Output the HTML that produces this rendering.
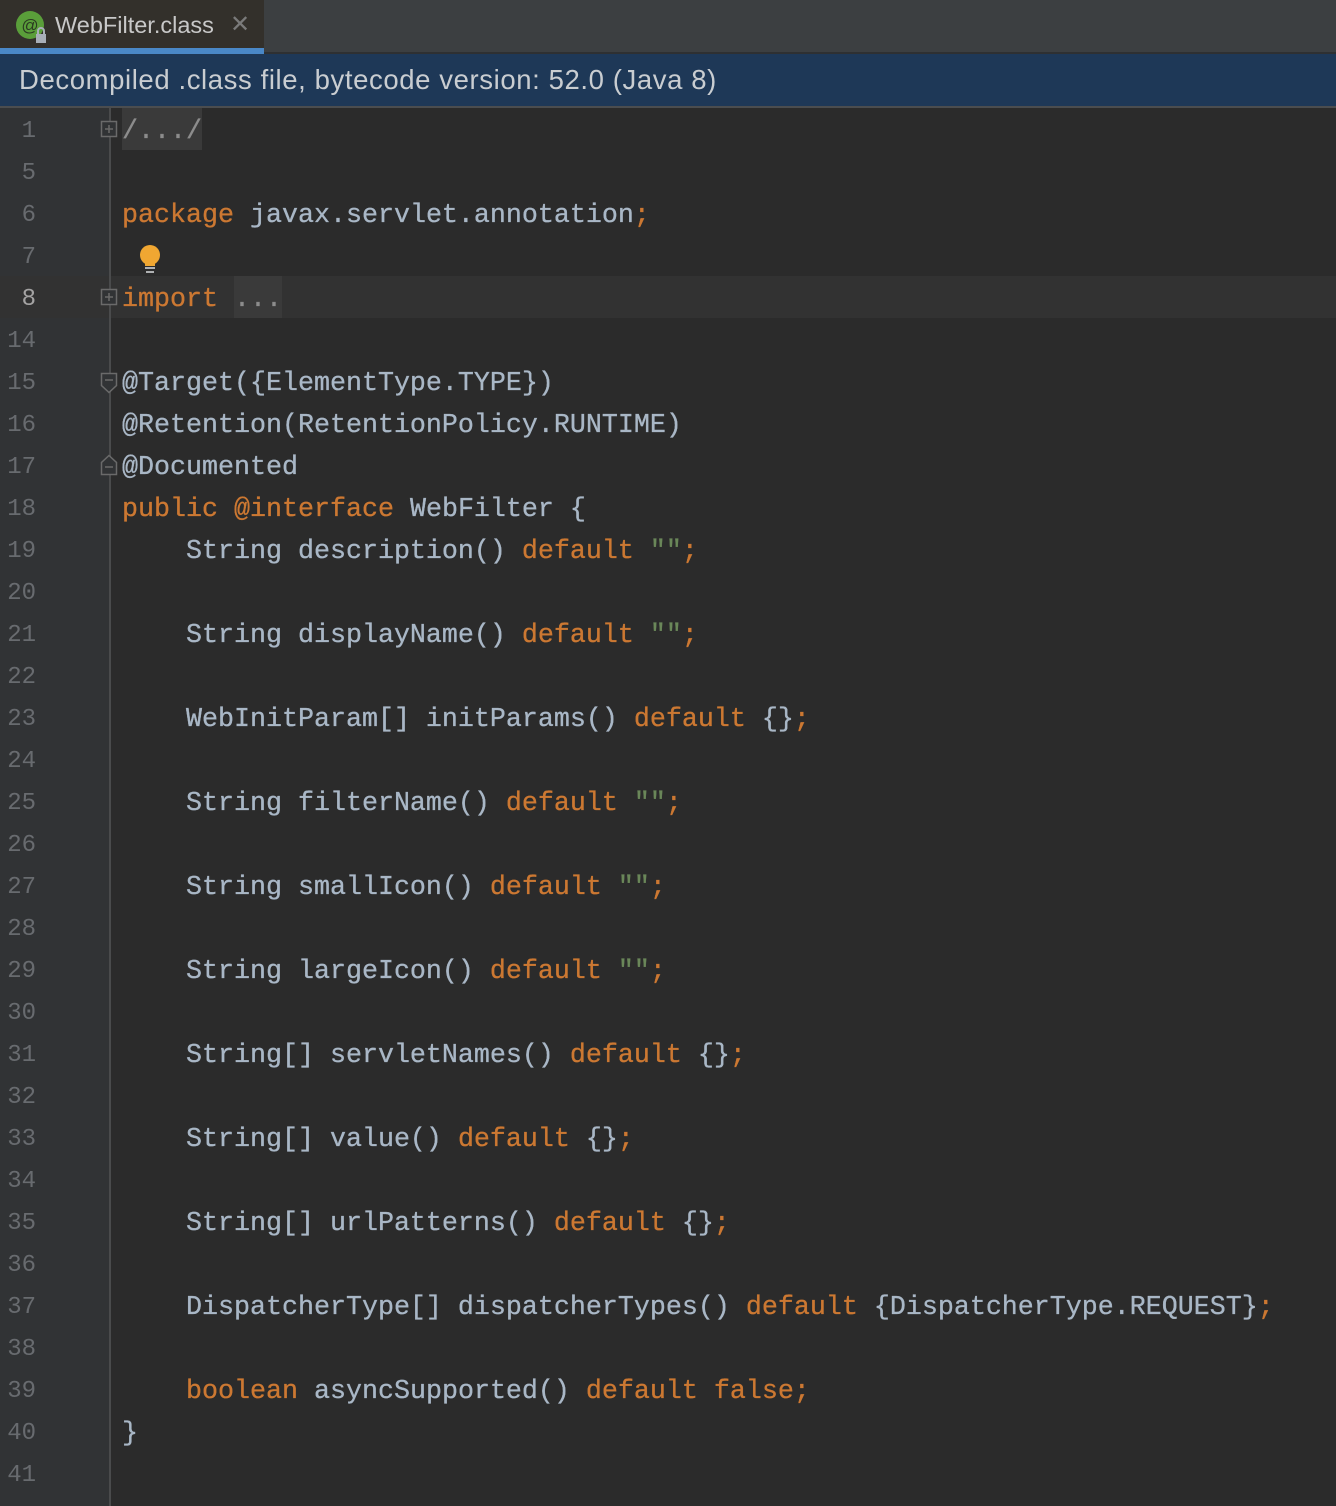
<!DOCTYPE html>
<html><head><meta charset="utf-8"><style>
html,body{margin:0;padding:0;width:1336px;height:1506px;overflow:hidden;background:#2B2B2B;font-family:"Liberation Sans",sans-serif}
.tabbar{position:absolute;left:0;top:0;width:1336px;height:52px;background:#3C3F41}
.tab{position:absolute;left:0;top:0;width:264px;height:48px;background:#33302B}
.tabul{position:absolute;left:0;top:48px;width:264px;height:6px;background:#4A88C7}
.sep{position:absolute;left:264px;top:52px;width:1072px;height:2px;background:#2E3032}
.tab .name{position:absolute;left:55px;top:12px;font-size:23.5px;color:#C8C8C8}
.tab .x{position:absolute;left:230px;top:10px;font-size:24px;color:#7A7A7A}
.banner{position:absolute;left:0;top:54px;width:1336px;height:52px;background:#1E3857;border-bottom:2px solid #4B4D4F}
.banner span{position:absolute;left:19px;top:10px;font-size:27.5px;letter-spacing:0.6px;color:#C9CDD1}
.gutter{position:absolute;left:0;top:108px;width:110px;height:1398px;background:#313335}
.gline{position:absolute;left:109px;top:108px;width:2px;height:1398px;background:#4A4B4C}
.row{position:absolute;left:0;width:1336px;height:42px}
.ln{position:absolute;left:0;top:3px;width:36px;text-align:right;font-family:"Liberation Mono",monospace;font-size:24px;color:#686B6F;line-height:42px}
.code{position:absolute;left:122px;top:3px;font-family:"Liberation Mono",monospace;font-size:26.67px;line-height:42px;color:#A9B7C6;white-space:pre;-webkit-text-stroke:0.3px currentColor}
.k{color:#CC7832}.s{color:#6A8759}
.fold{background:#3A3A3A;color:#8C8C8C}
.hl{background:#323232}
</style></head><body>
<div class="tabbar"></div>
<div class="tab">
<svg style="position:absolute;left:14px;top:10px" width="34" height="34" viewBox="0 0 34 34">
<circle cx="16" cy="15" r="14" fill="#5A9E3A"/>
<text x="16" y="21" font-family="Liberation Sans" font-size="17" text-anchor="middle" fill="#2B3A22">@</text>
<rect x="22" y="24" width="10" height="9" fill="#A8AFB8"/>
<path d="M24 24 v-3 a3 3 0 0 1 6 0 v3" stroke="#A8AFB8" stroke-width="2" fill="none"/>
</svg>
<span class="name">WebFilter.class</span><span class="x">✕</span></div>
<div class="tabul"></div><div class="sep"></div>
<div class="banner"><span>Decompiled .class file, bytecode version: 52.0 (Java 8)</span></div>
<div class="gutter"></div>
<div class="row hl" style="top:276px"></div>
<div class="gline"></div>
<div style="position:absolute;left:122px;top:108px;width:80px;height:42px;background:#3A3A3A"></div>
<div style="position:absolute;left:234px;top:276px;width:48px;height:42px;background:#3A3A3A"></div>

<div class="row" style="top:108px"><span class="ln">1</span><span class="code" style="color:#8C8C8C">/.../</span></div>
<div class="row" style="top:150px"><span class="ln">5</span></div>
<div class="row" style="top:192px"><span class="ln">6</span><span class="code"><span class="k">package</span> javax.servlet.annotation<span class="k">;</span></span></div>
<div class="row" style="top:234px"><span class="ln">7</span></div>
<div class="row" style="top:276px"><span class="ln" style="color:#A4A3A3">8</span><span class="code"><span class="k">import</span> <span style="color:#8C8C8C">...</span></span></div>
<div class="row" style="top:318px"><span class="ln">14</span></div>
<div class="row" style="top:360px"><span class="ln">15</span><span class="code">@Target({ElementType.TYPE})</span></div>
<div class="row" style="top:402px"><span class="ln">16</span><span class="code">@Retention(RetentionPolicy.RUNTIME)</span></div>
<div class="row" style="top:444px"><span class="ln">17</span><span class="code">@Documented</span></div>
<div class="row" style="top:486px"><span class="ln">18</span><span class="code"><span class="k">public @interface</span> WebFilter {</span></div>
<div class="row" style="top:528px"><span class="ln">19</span><span class="code">    String description() <span class="k">default</span> <span class="s">""</span><span class="k">;</span></span></div>
<div class="row" style="top:570px"><span class="ln">20</span></div>
<div class="row" style="top:612px"><span class="ln">21</span><span class="code">    String displayName() <span class="k">default</span> <span class="s">""</span><span class="k">;</span></span></div>
<div class="row" style="top:654px"><span class="ln">22</span></div>
<div class="row" style="top:696px"><span class="ln">23</span><span class="code">    WebInitParam[] initParams() <span class="k">default</span> {}<span class="k">;</span></span></div>
<div class="row" style="top:738px"><span class="ln">24</span></div>
<div class="row" style="top:780px"><span class="ln">25</span><span class="code">    String filterName() <span class="k">default</span> <span class="s">""</span><span class="k">;</span></span></div>
<div class="row" style="top:822px"><span class="ln">26</span></div>
<div class="row" style="top:864px"><span class="ln">27</span><span class="code">    String smallIcon() <span class="k">default</span> <span class="s">""</span><span class="k">;</span></span></div>
<div class="row" style="top:906px"><span class="ln">28</span></div>
<div class="row" style="top:948px"><span class="ln">29</span><span class="code">    String largeIcon() <span class="k">default</span> <span class="s">""</span><span class="k">;</span></span></div>
<div class="row" style="top:990px"><span class="ln">30</span></div>
<div class="row" style="top:1032px"><span class="ln">31</span><span class="code">    String[] servletNames() <span class="k">default</span> {}<span class="k">;</span></span></div>
<div class="row" style="top:1074px"><span class="ln">32</span></div>
<div class="row" style="top:1116px"><span class="ln">33</span><span class="code">    String[] value() <span class="k">default</span> {}<span class="k">;</span></span></div>
<div class="row" style="top:1158px"><span class="ln">34</span></div>
<div class="row" style="top:1200px"><span class="ln">35</span><span class="code">    String[] urlPatterns() <span class="k">default</span> {}<span class="k">;</span></span></div>
<div class="row" style="top:1242px"><span class="ln">36</span></div>
<div class="row" style="top:1284px"><span class="ln">37</span><span class="code">    DispatcherType[] dispatcherTypes() <span class="k">default</span> {DispatcherType.REQUEST}<span class="k">;</span></span></div>
<div class="row" style="top:1326px"><span class="ln">38</span></div>
<div class="row" style="top:1368px"><span class="ln">39</span><span class="code">    <span class="k">boolean</span> asyncSupported() <span class="k">default false;</span></span></div>
<div class="row" style="top:1410px"><span class="ln">40</span><span class="code">}</span></div>
<div class="row" style="top:1452px"><span class="ln">41</span></div>

<svg style="position:absolute;left:100px;top:120px" width="20" height="20"><rect x="1.5" y="1.5" width="15" height="15" fill="#313335" stroke="#6A6A6A" stroke-width="1.5"/><path d="M5 9h8M9 5v8" stroke="#6A6A6A" stroke-width="1.5"/></svg>
<svg style="position:absolute;left:100px;top:288px" width="20" height="20"><rect x="1.5" y="1.5" width="15" height="15" fill="#313335" stroke="#6A6A6A" stroke-width="1.5"/><path d="M5 9h8M9 5v8" stroke="#6A6A6A" stroke-width="1.5"/></svg>
<svg style="position:absolute;left:100px;top:372px" width="20" height="24"><path d="M1.5 1.5h15v12l-7.5 7l-7.5-7z" fill="#313335" stroke="#6A6A6A" stroke-width="1.5"/><path d="M5 8h8" stroke="#6A6A6A" stroke-width="1.5"/></svg>
<svg style="position:absolute;left:100px;top:452px" width="20" height="24"><path d="M1.5 22.5h15v-12l-7.5-7l-7.5 7z" fill="#313335" stroke="#6A6A6A" stroke-width="1.5"/><path d="M5 15h8" stroke="#6A6A6A" stroke-width="1.5"/></svg>
<svg style="position:absolute;left:138px;top:245px" width="24" height="30"><circle cx="12" cy="10" r="10" fill="#F0A732"/><rect x="7" y="16" width="10" height="5" fill="#F0A732"/><path d="M7 23h10M8 27h8" stroke="#AFB1B3" stroke-width="2"/></svg>
</body></html>
